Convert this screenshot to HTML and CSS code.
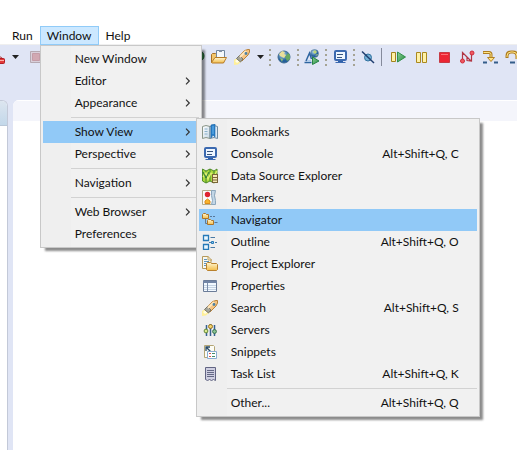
FILE: index.html
```html
<!DOCTYPE html>
<html lang="en">
<head>
<meta charset="utf-8">
<title>Window menu</title>
<link rel="stylesheet" href="styles.css">
</head>
<body>
<svg class="defs" aria-hidden="true">
  <defs>
    <linearGradient id="gold" x1="0" y1="0" x2="0" y2="1"><stop offset="0" stop-color="#fff6d2"/><stop offset="1" stop-color="#f3bd4a"/></linearGradient>
    <linearGradient id="green" x1="0" y1="0" x2="1" y2="1"><stop offset="0" stop-color="#8fd09a"/><stop offset="1" stop-color="#1f8a3a"/></linearGradient>
    <linearGradient id="page" x1="0" y1="0" x2="1" y2="1"><stop offset="0" stop-color="#ffffff"/><stop offset="1" stop-color="#c6d8e6"/></linearGradient>
    <radialGradient id="ocean" cx=".4" cy=".3"><stop offset="0" stop-color="#b9dcef"/><stop offset="1" stop-color="#235f9c"/></radialGradient>
  </defs>
  <symbol id="chevron" viewBox="0 0 6 8"><path d="M1 .7 4.300 4 1 7.300" fill="none" stroke="#333" stroke-width="1.200"/></symbol>
  <symbol id="caret" viewBox="0 0 7 4"><path d="M0 0h7L3.500 4z" fill="#222"/></symbol>
  <symbol id="rocket" viewBox="0 0 16 16">
    <path d="M0 11 4 8.500 8 12 4 15.500 0 16z" fill="#fff09a"/><path d="M1 12 4 10 6 12 3 14z" fill="#fffde8"/>
    <path d="M4.500 8 10.500 1.500 14 .5h1.500V3L14 6 8 12z" fill="#f6c584" stroke="#b98238"/>
    <path d="M2.500 9.500 5.500 6.500 9 10l-2.500 3z" fill="#a5a59a" stroke="#77756a"/>
    <path d="M6 8 12 2" stroke="#ffe7bd" stroke-width="2"/><circle cx="12" cy="4.500" r="1.400" fill="#4d82a5"/>
  </symbol>
  <symbol id="console" viewBox="0 0 16 16">
    <rect x="3" y="2" width="11" height="9" rx="1" fill="#eef6ff" stroke="#3b69b0" stroke-width="2"/>
    <path d="M5 5.500h6M5 8.500h5" stroke="#38557f"/><path d="M6 12h5v1H6z" fill="#2d5fa8"/><path d="M3.500 13.500h10" stroke="#3b69b0"/>
  </symbol>
</svg>

<header class="menubar">
  <nav class="menubar-items" aria-label="Main menu">
    <div class="menubar-item"><button class="menubar-button" type="button">Run</button></div>
    <div class="menubar-item">
      <button class="menubar-button open" type="button" aria-expanded="true">Window</button>
      <ul class="menu window-menu">
        <li><button class="row" type="button"><span class="label">New Window</span></button></li>
        <li><button class="row" type="button"><span class="label">Editor</span><svg class="chevron"><use href="#chevron"/></svg></button></li>
        <li><button class="row" type="button"><span class="label">Appearance</span><svg class="chevron"><use href="#chevron"/></svg></button></li>
        <li class="divider"></li>
        <li class="has-submenu">
          <button class="row selected" type="button" aria-expanded="true"><span class="label">Show View</span><svg class="chevron"><use href="#chevron"/></svg></button>
          <ul class="menu submenu">
            <li><button class="row" type="button"><svg class="icon" viewBox="0 0 16 16"><path d="M.5 2.500 4 1.500l4 1v12l-4-1-3.500 1z" fill="url(#page)" stroke="#8b9688"/><path d="M8 2.500l4-1 3.500 1v12l-3.500-1-4 1z" fill="#d9e9f7" stroke="#6f8aa0"/><path d="M2.500 5h3M2.500 7.500h3M2.500 10h3" stroke="#8ab0ca"/><path d="M9 1l4-1v13l-2-2-2 3z" fill="#287fc9" stroke="#1c65a8" stroke-width=".6"/><path d="M11 2v8" stroke="#69b5ec"/></svg><span class="label">Bookmarks</span></button></li>
            <li><button class="row" type="button"><svg class="icon"><use href="#console"/></svg><span class="label">Console</span><kbd>Alt+Shift+Q, C</kbd></button></li>
            <li><button class="row" type="button"><svg class="icon" viewBox="0 0 16 16"><path d="M.5 1 4 3l4-2 4 2 3-2v12l-3 2-4-2-4 2-3.500-2z" fill="#a9d83c" stroke="#528d2b"/><path d="M4 3v12M8 1v12M12 3v10" stroke="#43882f"/><path d="M1 9l3-4 2 6 3-6 3 3 3-5" fill="none" stroke="#e0f170" stroke-width="1.300"/><path d="M1 4l3 6 3-6" fill="none" stroke="#29743a"/><rect x="10.500" y="6.500" width="5" height="8" fill="#f5e9b6" stroke="#796537"/><path d="M11 9.500h4M11 12h4" stroke="#796537"/></svg><span class="label">Data Source Explorer</span></button></li>
            <li><button class="row" type="button"><svg class="icon" viewBox="0 0 16 16"><path d="M.5.500h12v14H.5z" fill="#f9fbfb" stroke="#b5ad8a"/><path d="M9.500.500h4l-1 5 1 5v4h-4l1-4-1-5z" fill="#c3d7e7" stroke="#8ba6bd"/><circle cx="5.500" cy="4.500" r="2.700" fill="#df2530"/><path d="M3 13.500V11l2.500-2L8 11v2.500z" fill="#f8b52c" stroke="#de8b1b"/></svg><span class="label">Markers</span></button></li>
            <li><button class="row selected" type="button"><svg class="icon" viewBox="0 0 16 16"><path d="M3.500 7v4.500H6" fill="none" stroke="#66798b"/><path d="M.5 6.500v-4l1-1h2l1 1h2v4z" fill="url(#gold)" stroke="#ad7428"/><path d="M5.500 12.500v-4l1-1h2l1 1h2v4z" fill="url(#gold)" stroke="#ad7428"/><path d="M8 4.500h2m1 0h2M12.500 10.500h3" stroke="#56779b"/></svg><span class="label">Navigator</span></button></li>
            <li><button class="row" type="button"><svg class="icon" viewBox="0 0 16 16"><path d="M1.500 1.500h5v5h-5zM1.500 10.500h5v5h-5z" fill="#e9f7ff" stroke="#2779b7" stroke-width="1.300"/><path d="M8.500 3.500H13M8.500 13.500H13M7 8.500h2m4 0h2" stroke="#4b7aa4"/><path d="M9.500 7.500h2v2h-2z" fill="#8acaf0" stroke="#2779b7"/></svg><span class="label">Outline</span><kbd>Alt+Shift+Q, O</kbd></button></li>
            <li><button class="row" type="button"><svg class="icon" viewBox="0 0 16 16"><path d="M.5.500H6l3 3v9H.5z" fill="#f7f8f2" stroke="#b4995c"/><path d="M6 0v4h4" fill="none" stroke="#c5a359"/><path d="M2 3.500h3M2 5.500h5M2 7.500h3M2 9.500h2" stroke="#5f93bd"/><path d="M4.500 13.500V7.500l1-1h3l1 1h5l1 1v5l-1 1h-9z" fill="url(#gold)" stroke="#b9812d"/></svg><span class="label">Project Explorer</span></button></li>
            <li><button class="row" type="button"><svg class="icon" viewBox="0 0 16 16"><path d="M1.500 2.500h13v11h-13z" fill="#f2f9ff" stroke="#6b7c98"/><path d="M1 3h14v2H1z" fill="#7285a5"/><path d="M2 7.500h12M2 9.500h12M2 11.500h12" stroke="#c5d3e2"/><path d="M5.500 5v8" stroke="#7c8eaa"/></svg><span class="label">Properties</span></button></li>
            <li><button class="row" type="button"><svg class="icon"><use href="#rocket"/></svg><span class="label">Search</span><kbd>Alt+Shift+Q, S</kbd></button></li>
            <li><button class="row" type="button"><svg class="icon" viewBox="0 0 16 16"><path d="M4.500 3v11M8.500 2v12M12.500 3v11" stroke="#356091" stroke-width="1.500"/><circle cx="4" cy="9" r="1.900" fill="#dce990" stroke="#648a34"/><circle cx="8.500" cy="4.500" r="2" fill="#f4d36b" stroke="#977523"/><circle cx="12.500" cy="9.500" r="1.900" fill="#8dc596" stroke="#35724b"/></svg><span class="label">Servers</span></button></li>
            <li><button class="row" type="button"><svg class="icon" viewBox="0 0 16 16"><path d="M2.500 1.500h9l1 1v11h-10z" fill="#fcfcf5" stroke="#b4a675"/><path d="M4 7V3h4M4 3l5 5" fill="none" stroke="#294a66" stroke-width="1.300"/><path d="M5.500 7.500h9v7h-9z" fill="#fff" stroke="#8badd1"/><path d="M7 9.500h2M7 12.500h2" stroke="#d85451"/><path d="M10 9.500h3M10 12.500h3" stroke="#438b6b"/></svg><span class="label">Snippets</span></button></li>
            <li><button class="row" type="button"><svg class="icon" viewBox="0 0 16 16"><path d="M3.500 1.500h10v13l-2-1-2 1-2-1-2 1-2-1z" fill="#cfcfe1" stroke="#626583"/><path d="M5 4.500h7M5 6.500h7M5 8.500h7M5 10.500h7" stroke="#656985"/></svg><span class="label">Task List</span><kbd>Alt+Shift+Q, K</kbd></button></li>
            <li class="divider"></li>
            <li><button class="row" type="button"><span class="label">Other...</span><kbd>Alt+Shift+Q, Q</kbd></button></li>
          </ul>
        </li>
        <li><button class="row" type="button"><span class="label">Perspective</span><svg class="chevron"><use href="#chevron"/></svg></button></li>
        <li class="divider"></li>
        <li><button class="row" type="button"><span class="label">Navigation</span><svg class="chevron"><use href="#chevron"/></svg></button></li>
        <li class="divider"></li>
        <li><button class="row" type="button"><span class="label">Web Browser</span><svg class="chevron"><use href="#chevron"/></svg></button></li>
        <li><button class="row" type="button"><span class="label">Preferences</span></button></li>
      </ul>
    </div>
    <div class="menubar-item"><button class="menubar-button" type="button">Help</button></div>
  </nav>
</header>

<div class="toolbar">
  <div class="tools tools-start">
    <button class="tool clipped" type="button" aria-label="External tools"><svg class="icon" viewBox="0 0 16 16"><path d="M9 9.500c0-2 4-2 4 0" fill="none" stroke="#a22"/><rect x="5.500" y="9.500" width="10" height="5" rx="1" fill="#e33a3a" stroke="#b31d25"/><path d="M6 11.500h9" stroke="#ffb0a8"/></svg></button>
    <button class="tool" type="button" aria-label="More tools"><svg class="caret"><use href="#caret"/></svg></button>
    <button class="tool stop-muted" type="button" aria-label="Stop"><svg class="icon" viewBox="0 0 16 16"><path d="M2.500 2.500h11v11h-11z" fill="#d9cfda" stroke="#b5a9b2"/><path d="M4.500 4.500h7v7h-7z" fill="#d1a8b2" stroke="#c49ca7"/></svg></button>
    <button class="tool peek" type="button" aria-label="Debug"><svg class="icon" viewBox="0 0 16 16"><circle cx="9" cy="7" r="5" fill="#3d9450" stroke="#1b5e30"/></svg></button>
  </div>
  <div class="tools">
    <button class="tool" type="button" aria-label="Open resource"><svg class="icon" viewBox="0 0 16 16"><path d="M.5 13.500v-8l1-1h3l1 1h7v8z" fill="#f2c66e" stroke="#a87126"/><path d="M5.500 1.500h8v8h-8z" fill="#f4f8fb" stroke="#7187a0"/><path d="M8 1h3v2H8z" fill="#8390a6"/><path d="M.5 13.500 4 8.500h11.500l-3 5.500H1z" fill="url(#gold)" stroke="#b67b28"/></svg></button>
    <button class="tool" type="button" aria-label="Search"><svg class="icon"><use href="#rocket"/></svg></button>
    <button class="tool" type="button" aria-label="Search options"><svg class="caret"><use href="#caret"/></svg></button>
  </div>
  <span class="grip"></span>
  <button class="tool" type="button" aria-label="Web browser"><svg class="icon" viewBox="0 0 16 16"><circle cx="8" cy="8" r="6" fill="url(#ocean)" stroke="#3f6b91"/><path d="M3 5l3-3 3 1-1 2 2 1-2 3-2-1-2-1z" fill="#e9df9a"/><path d="M9 8l3-4 2 2v4l-3 2z" fill="#67a760"/><path d="M4 9l3 1-1 3z" fill="#92bf74"/></svg></button>
  <span class="grip"></span>
  <button class="tool" type="button" aria-label="Run service"><svg class="icon" viewBox="0 0 16 16"><circle cx="10.500" cy="4.500" r="4" fill="url(#ocean)" stroke="#6587a1" stroke-width=".6"/><path d="M9 3l2-2 2 2-2 2zM11 7l2-2 1 1z" fill="#bfd776"/><path d="M.5 13.500h7M2 12 5.500 4l2 6" fill="none" stroke="#2e65a0" stroke-width="1.500"/><path d="M3 12h4" stroke="#afcbea" stroke-width="2"/><path d="M8.500 8v7.500L15 12z" fill="url(#green)" stroke="#278444"/></svg></button>
  <span class="grip"></span>
  <button class="tool" type="button" aria-label="Open console"><svg class="icon"><use href="#console"/></svg></button>
  <span class="grip"></span>
  <button class="tool" type="button" aria-label="Skip all breakpoints"><svg class="icon" viewBox="0 0 16 16"><circle cx="8" cy="8.500" r="3.500" fill="#73b0d5" stroke="#31719f"/><path d="M2 2.500 14 14" stroke="#203f70" stroke-width="1.500"/></svg></button>
  <span class="rule"></span>
  <div class="tools tools-debug">
    <button class="tool" type="button" aria-label="Resume"><svg class="icon" viewBox="0 0 16 16"><path d="M1.500 3.500h4v9h-4z" fill="#fff1a6" stroke="#a3831c"/><path d="M7.500 3v10L15.500 8z" fill="url(#green)" stroke="#31904a"/></svg></button>
    <button class="tool" type="button" aria-label="Suspend"><svg class="icon" viewBox="0 0 16 16"><path d="M3.500 3.500h4v10h-4zM9.500 3.500h4v10h-4z" fill="#fff1a6" stroke="#aa881e"/></svg></button>
    <button class="tool" type="button" aria-label="Terminate"><svg class="icon" viewBox="0 0 16 16"><path d="M3.500 3.500h10v10h-10z" fill="#ec2634" stroke="#c63b45"/><path d="M5 5.500h7" stroke="#fb7177"/></svg></button>
    <button class="tool" type="button" aria-label="Disconnect"><svg class="icon" viewBox="0 0 16 16"><path d="M3.500 12V3.500L8 8M8 8.500v3L12.500 12V5M8 8l4 4" fill="none" stroke="#b13644" stroke-width="1.200"/><circle cx="3.500" cy="12" r="2" fill="#ef5962" stroke="#cf2c3a"/><circle cx="13" cy="4" r="2" fill="#ef5962" stroke="#cf2c3a"/></svg></button>
    <button class="tool" type="button" aria-label="Step into"><svg class="icon" viewBox="0 0 16 16"><path d="M1 3.500h6q2 0 2 2v4" fill="none" stroke="#ae7d20" stroke-width="3"/><path d="M1.500 3.500H7q2 0 2 2v4" fill="none" stroke="#ffe586"/><path d="M5.500 8.500h7L9 12.500z" fill="#ffe586" stroke="#b38224"/><path d="M1 13.500h4m7 0h4" stroke="#345d8a" stroke-width="2"/></svg></button>
    <button class="tool" type="button" aria-label="Step over"><svg class="icon" viewBox="0 0 16 16"><path d="M2 9V7q0-4 4-4h2q4 0 4 4v3" fill="none" stroke="#ae7d20" stroke-width="3"/><path d="M2 8V7q0-4 4-4h2q4 0 4 4v3" fill="none" stroke="#ffe586"/><path d="M5 13.500h5" stroke="#345d8a" stroke-width="2"/></svg></button>
  </div>
</div>

<main class="workbench">
  <section class="side-panel"><div class="side-tab"></div></section>
  <section class="editor"><div class="editor-tabs"></div></section>
</main>
</body>
</html>
```
FILE: styles.css
```css
* { box-sizing: border-box; }

body {
  margin: 0;
  min-height: 100vh;
  display: flex;
  flex-direction: column;
  overflow: hidden;
  background: #fff;
  color: #111;
  font: 12px/20px Lato, "Noto Sans", sans-serif;
}

button {
  margin: 0;
  padding: 0;
  border: 0;
  background: none;
  color: inherit;
  font: inherit;
}

svg { display: block; flex: none; }
.defs { position: absolute; width: 0; height: 0; }
.icon { width: 16px; height: 16px; }
.chevron { width: 6px; height: 8px; }
.caret { width: 7px; height: 4px; }

.menubar {
  padding: 26px 5px 0;
  border-bottom: 1px solid #efefef;
}
.menubar-items { display: flex; height: 18px; }
.menubar-item { position: relative; }
.menubar-button {
  height: 19px;
  padding: 0 6px;
  border: 1px solid transparent;
  line-height: 17px;
}
.menubar-button.open { border-color: #90cbf8; background: #cce8ff; }

.menu {
  position: absolute;
  z-index: 2;
  margin: 0;
  padding: 2px;
  border: 1px solid #c8c8c8;
  background: linear-gradient(90deg, #efefef 30px, #f1f1f1 30px);
  box-shadow: 4px 4px 2px -1px rgba(0, 0, 0, 0.45);
  list-style: none;
}
.window-menu { top: 19px; left: 0; width: 162px; }
.submenu { top: -3px; left: 153px; width: 284px; }
.has-submenu { position: relative; }

.row {
  display: flex;
  align-items: center;
  width: 100%;
  height: 22px;
  padding: 0 8px 0 3px;
  text-align: left;
  white-space: nowrap;
}
.row.selected { background: #91c9f7; }
.label { flex: 1; padding-left: 29px; }
.icon + .label { padding-left: 13px; }
.submenu .row { padding-right: 18px; }
kbd { font: inherit; }

.divider {
  height: 7px;
  padding: 3px 0 3px 28px;
}
.divider::before { content: ""; display: block; height: 1px; background: #d2d2d2; }

.toolbar {
  display: flex;
  align-items: center;
  gap: 5px;
  height: 24px;
  background: #e0e5f5;
}
.tool { display: flex; align-items: center; justify-content: center; height: 18px; }
.tools { display: flex; align-items: center; gap: 7px; }
.tools-start { flex: 0 0 206px; }
.clipped { width: 5px; justify-content: flex-end; overflow: hidden; }
.stop-muted { margin-left: 2px; }
.peek { margin-left: auto; }
.grip {
  flex: none;
  width: 2px;
  height: 17px;
  background: repeating-linear-gradient(#a5a394 0 2px, transparent 2px 5px);
}
.rule { flex: none; width: 1px; height: 18px; background: #858a9b; }
.tools-debug { padding-left: 3px; }

.workbench {
  flex: 1;
  display: flex;
  gap: 5px;
  padding-top: 31px;
  background: #e0e5f5;
}
.side-panel {
  flex: 0 0 8px;
  border: 1px solid #c3c9d8;
  border-width: 1px 1px 0 0;
  border-radius: 0 6px 0 0;
  background: #fff;
  overflow: hidden;
}
.side-tab { height: 25px; border-bottom: 1px solid #b9c8d8; background: linear-gradient(#dce5ef, #c3d8ea); }
.editor { flex: 1; border-radius: 6px 0 0 0; background: #fff; overflow: hidden; }
.editor-tabs { height: 21px; border-top: 1px solid #fff; background: #f4f5fb; }
```
